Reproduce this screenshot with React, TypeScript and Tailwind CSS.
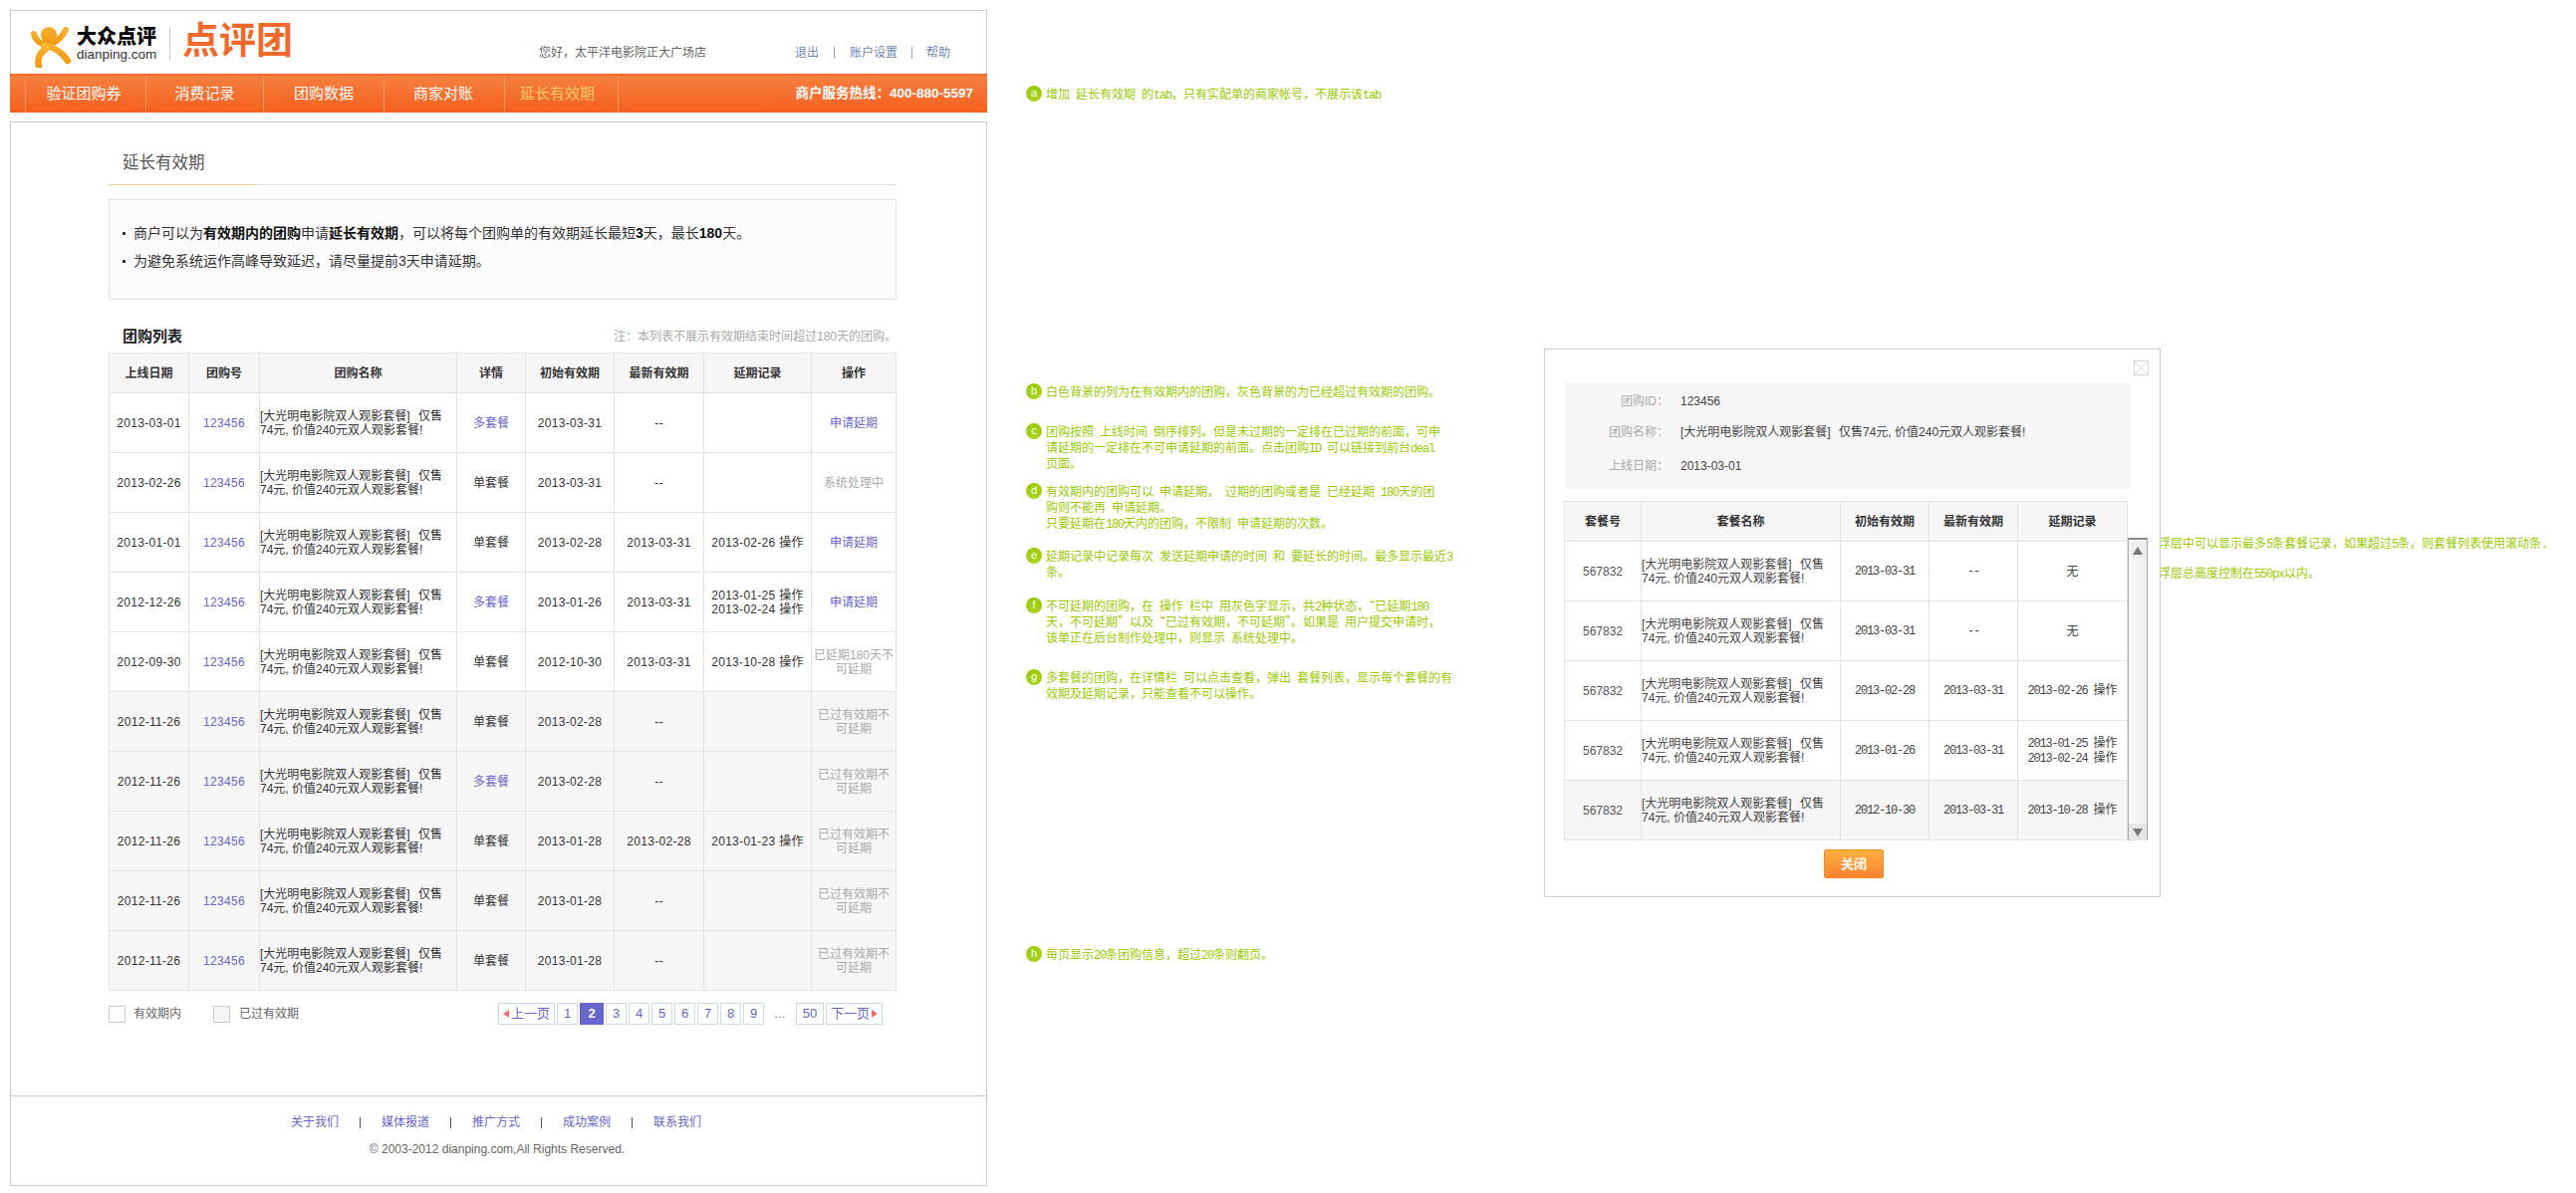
import React from "react";

const SANS = "font-['Liberation_Sans','Noto_Sans_CJK_SC',sans-serif]";

function Sim({ t }: { t: string }) {
  return (
    <>
      {t.split(/([\x20-\x7e]+)/).map((p, i) =>
        /^[\x20-\x7e]+$/.test(p) ? (
          <span key={i} className="font-['Liberation_Mono',monospace] tracking-[-1.2px] whitespace-pre">
            {p}
          </span>
        ) : (
          <span key={i}>{p}</span>
        )
      )}
    </>
  );
}

function Logo() {
  return (
    <svg width="44" height="44" viewBox="0 0 44 44" className="shrink-0">
      <defs>
        <linearGradient id="lg" x1="0" y1="0" x2="0" y2="1">
          <stop offset="0" stopColor="#f9b233" />
          <stop offset="1" stopColor="#f29a12" />
        </linearGradient>
      </defs>
      <circle cx="19" cy="11" r="8" fill="url(#lg)" />
      <path d="M4 10 C7 23 25 26 36 6" fill="none" stroke="url(#lg)" strokeWidth="6" strokeLinecap="round" />
      <path d="M14 22 C24 23 33 29 38 37" fill="none" stroke="url(#lg)" strokeWidth="6.5" strokeLinecap="round" />
      <path d="M17 24 C10 29 7 35 9 42" fill="none" stroke="url(#lg)" strokeWidth="6.5" strokeLinecap="round" />
    </svg>
  );
}

function Name() {
  return (
    <div className="text-left leading-[14px]">
      [大光明电影院双人观影套餐] <span className="ml-[5px]">仅售</span>
      <br />
      74元, 价值240元双人观影套餐!
    </div>
  );
}

const navItems = [
  { t: "验证团购券", c: "w-[121px] pr-[4px] text-white" },
  { t: "消费记录", c: "w-[118px] text-white" },
  { t: "团购数据", c: "w-[121px] text-white" },
  { t: "商家对账", c: "w-[121px] pr-[2px] text-white" },
  { t: "延长有效期", c: "w-[114px] pr-[8px] text-[#ffcc66]" },
];

type Row = {
  d: string;
  m: boolean;
  s: string;
  n: string;
  r: string[];
  op: string[];
  link?: boolean;
  past?: boolean;
};

const past = ["已过有效期不", "可延期"];
const rows: Row[] = [
  { d: "2013-03-01", m: true, s: "2013-03-31", n: "--", r: [], op: ["申请延期"], link: true },
  { d: "2013-02-26", m: false, s: "2013-03-31", n: "--", r: [], op: ["系统处理中"] },
  { d: "2013-01-01", m: false, s: "2013-02-28", n: "2013-03-31", r: ["2013-02-26 操作"], op: ["申请延期"], link: true },
  { d: "2012-12-26", m: true, s: "2013-01-26", n: "2013-03-31", r: ["2013-01-25 操作", "2013-02-24 操作"], op: ["申请延期"], link: true },
  { d: "2012-09-30", m: false, s: "2012-10-30", n: "2013-03-31", r: ["2013-10-28 操作"], op: ["已延期180天不", "可延期"] },
  { d: "2012-11-26", m: false, s: "2013-02-28", n: "--", r: [], op: past, past: true },
  { d: "2012-11-26", m: true, s: "2013-02-28", n: "--", r: [], op: past, past: true },
  { d: "2012-11-26", m: false, s: "2013-01-28", n: "2013-02-28", r: ["2013-01-23 操作"], op: past, past: true },
  { d: "2012-11-26", m: false, s: "2013-01-28", n: "--", r: [], op: past, past: true },
  { d: "2012-11-26", m: false, s: "2013-01-28", n: "--", r: [], op: past, past: true },
];

const headers = ["上线日期", "团购号", "团购名称", "详情", "初始有效期", "最新有效期", "延期记录", "操作"];
const colW = ["w-[80px]", "w-[71px]", "w-[198px]", "w-[69px]", "w-[89px]", "w-[90px]", "w-[108px]", "w-[85px]"];

function MainTable() {
  return (
    <table className="w-[791px] table-fixed border-collapse text-[12px] text-[#333] text-center">
      <colgroup>
        {colW.map((c, i) => (
          <col key={i} className={c} />
        ))}
      </colgroup>
      <thead>
        <tr className="h-[40px] bg-[#f6f6f6]">
          {headers.map((h) => (
            <th key={h} className="border border-[#e3e3e3] font-bold p-0">
              {h}
            </th>
          ))}
        </tr>
      </thead>
      <tbody>
        {rows.map((r, i) => (
          <tr key={i} className={r.past ? "h-[60px] bg-[#f6f6f6]" : "h-[60px]"}>
            <td className="border border-[#e3e3e3] p-0 tracking-[0.3px]">{r.d}</td>
            <td className="border border-[#e3e3e3] p-0 text-[#6666cc] tracking-[0.3px]">123456</td>
            <td className="border border-[#e3e3e3] p-0">
              <Name />
            </td>
            <td className={r.m ? "border border-[#e3e3e3] p-0 text-[#6666cc]" : "border border-[#e3e3e3] p-0"}>
              {r.m ? "多套餐" : "单套餐"}
            </td>
            <td className="border border-[#e3e3e3] p-0 tracking-[0.3px]">{r.s}</td>
            <td className="border border-[#e3e3e3] p-0 tracking-[0.3px]">{r.n}</td>
            <td className="border border-[#e3e3e3] p-0 leading-[14px] tracking-[0.3px]">
              {r.r.map((x) => (
                <div key={x}>{x}</div>
              ))}
            </td>
            <td className={r.link ? "border border-[#e3e3e3] p-0 text-[#6666cc] leading-[14px]" : "border border-[#e3e3e3] p-0 text-[#aaaaaa] leading-[14px]"}>
              {r.op.map((x) => (
                <div key={x}>{x}</div>
              ))}
            </td>
          </tr>
        ))}
      </tbody>
    </table>
  );
}

const pageBtn = "h-[22px] flex items-center justify-center border border-[#c9dbe6] text-[#6666cc] text-[13px]";

function Pager() {
  return (
    <div className="flex items-center gap-[2px] mr-[14px] text-[12px]">
      <div className={`${pageBtn} w-[57px] gap-[2px] text-[12px]`}>
        <span className="w-0 h-0 border-y-[4px] border-y-transparent border-r-[6px] border-r-[#ff6666]" />
        上一页
      </div>
      <div className={`${pageBtn} w-[21px]`}>1</div>
      <div className="h-[22px] w-[24px] flex items-center justify-center bg-[#6666cc] text-white font-bold text-[13px]">2</div>
      {["3", "4", "5", "6", "7", "8", "9"].map((p) => (
        <div key={p} className={`${pageBtn} w-[21px]`}>
          {p}
        </div>
      ))}
      <div className="w-[28px] text-center text-[#6688aa] text-[13px]">...</div>
      <div className={`${pageBtn} w-[28px]`}>50</div>
      <div className={`${pageBtn} w-[57px] gap-[2px] text-[12px]`}>
        下一页
        <span className="w-0 h-0 border-y-[4px] border-y-transparent border-l-[6px] border-l-[#ff6666]" />
      </div>
    </div>
  );
}

function Page() {
  return (
    <div className="w-[981px] shrink-0 text-[12px]">
      <header className="h-[64px] border-t border-x border-[#cccccc] flex items-start bg-white">
        <div className="ml-[19px] mt-[13px]">
          <Logo />
        </div>
        <div className="ml-[3px] mt-[15px] w-[82px]">
          <div className="text-[20px] leading-[22px] font-black text-black whitespace-nowrap">大众点评</div>
          <div className="text-[13.5px] leading-[14px] text-[#333] font-['Liberation_Sans',sans-serif] whitespace-nowrap">dianping.com</div>
        </div>
        <div className="ml-[11px] mt-[16px] h-[34px] w-px bg-[#cccccc]" />
        <div className="ml-[12px] mt-[11px] text-[37px] leading-[40px] font-bold text-[#f0692b] whitespace-nowrap">点评团</div>
        <div className="ml-[247px] mt-[33px] leading-[18px] text-[#666] whitespace-nowrap">您好，太平洋电影院正大广场店</div>
        <div className="ml-[89px] mt-[33px] flex items-center h-[18px] text-[#6d88b5] whitespace-nowrap">
          <span>退出</span>
          <span className="mx-[15px] w-px h-[12px] bg-[#8fa5c7]" />
          <span>账户设置</span>
          <span className="mx-[14px] w-px h-[12px] bg-[#8fa5c7]" />
          <span>帮助</span>
        </div>
      </header>
      <nav className="h-[39px] flex items-stretch bg-linear-to-b from-[#f57f3e] to-[#f55f1c] border-t-2 border-[#f0692b] pl-[15px]">
        <div className="flex items-stretch border-l border-[#f89a5f]">
          {navItems.map((n) => (
            <div key={n.t} className={`${n.c} flex items-center justify-center border-r border-[#f89a5f] text-[15px]`}>
              {n.t}
            </div>
          ))}
        </div>
        <div className="ml-auto pr-[14px] flex items-center text-white font-bold text-[13.5px] whitespace-nowrap">商户服务热线：400-880-5597</div>
      </nav>
      <main className="mt-[9px] border border-[#cccccc] bg-white">
        <div className="h-[977px] pl-[98px]">
          <div className="w-[791px]">
            <div className="h-[62px] pt-[30px] pl-[14px] text-[16.5px] leading-[20px] text-[#555]">延长有效期</div>
            <div className="flex h-px">
              <div className="w-[149px] bg-[#ecc9a0]" />
              <div className="flex-1 bg-[#e3e3e3]" />
            </div>
            <div className="mt-[14px] h-[101px] border border-[#e5e5e5] bg-[#fbfbfb] pt-[19px] pl-[24px] text-[14px] leading-[28px] text-[#333]">
              <div className="relative whitespace-nowrap">
                <span className="absolute -left-[11px] top-[13px] w-[3px] h-[3px] bg-[#333]" />
                商户可以为<b className="text-[#111]">有效期内的团购</b>申请<b className="text-[#111]">延长有效期</b>，可以将每个团购单的有效期延长最短<b className="text-[#111]">3</b>天，最长<b className="text-[#111]">180</b>天。
              </div>
              <div className="relative whitespace-nowrap">
                <span className="absolute -left-[11px] top-[13px] w-[3px] h-[3px] bg-[#333]" />
                为避免系统运作高峰导致延迟，请尽量提前3天申请延期。
              </div>
            </div>
            <div className="h-[53px] flex items-end justify-between pb-[8px] pl-[14px]">
              <div className="text-[15px] leading-[16px] font-bold text-[#222]">团购列表</div>
              <div className="text-[12px] leading-[16px] text-[#aaaaaa]">注：本列表不展示有效期结束时间超过180天的团购。</div>
            </div>
            <MainTable />
            <div className="mt-[12px] h-[22px] flex items-center justify-between">
              <div className="flex items-center text-[#666]">
                <span className="w-[17px] h-[17px] border border-[#cccccc] bg-white" />
                <span className="ml-[8px]">有效期内</span>
                <span className="ml-[32px] w-[17px] h-[17px] border border-[#cccccc] bg-[#f5f5f5]" />
                <span className="ml-[9px]">已过有效期</span>
              </div>
              <Pager />
            </div>
          </div>
        </div>
        <footer className="h-[90px] border-t border-[#cccccc] flex flex-col items-center">
          <div className="mt-[18px] mr-[5px] flex items-center h-[16px] text-[#6666cc] whitespace-nowrap">
            {["关于我们", "媒体报道", "推广方式", "成功案例", "联系我们"].map((t, i) => (
              <React.Fragment key={t}>
                {i > 0 && <span className="mx-[21px] w-px h-[11px] bg-[#555]" />}
                <span>{t}</span>
              </React.Fragment>
            ))}
          </div>
          <div className="mt-[11px] mr-[3px] text-[#666] leading-[16px]">© 2003-2012 dianping.com,All Rights Reserved.</div>
        </footer>
      </main>
    </div>
  );
}

const notes = [
  { l: "a", h: "h-[299px]", t: ["增加 延长有效期 的tab，只有实配单的商家帐号，不展示该tab"] },
  { l: "b", h: "h-[40px]", t: ["白色背景的列为在有效期内的团购，灰色背景的为已经超过有效期的团购。"] },
  { l: "c", h: "h-[60px]", t: ["团购按照 上线时间 倒序排列。但是未过期的一定排在已过期的前面，可申", "请延期的一定排在不可申请延期的前面。点击团购ID 可以链接到前台deal", "页面。"] },
  { l: "d", h: "h-[65px]", t: ["有效期内的团购可以 申请延期， 过期的团购或者是 已经延期 180天的团", "购则不能再 申请延期。", "只要延期在180天内的团购，不限制 申请延期的次数。"] },
  { l: "e", h: "h-[50px]", t: ["延期记录中记录每次 发送延期申请的时间 和 要延长的时间。最多显示最近3", "条。"] },
  { l: "f", h: "h-[72px]", t: ["不可延期的团购，在 操作 栏中 用灰色字显示，共2种状态，“已延期180", "天，不可延期”以及“已过有效期，不可延期”。如果是 用户提交申请时，", "该单正在后台制作处理中，则显示 系统处理中。"] },
  { l: "g", h: "h-[278px]", t: ["多套餐的团购，在详情栏 可以点击查看，弹出 套餐列表，显示每个套餐的有", "效期及延期记录，只能查看不可以操作。"] },
  { l: "h", h: "h-[16px]", t: ["每页显示20条团购信息，超过20条则翻页。"] },
];

function Notes() {
  return (
    <div className="ml-[39px] w-[480px] shrink-0 pt-[76px] text-[12px] text-[#99cc00] font-['Noto_Sans_CJK_SC',sans-serif]">
      {notes.map((n) => (
        <div key={n.l} className={`${n.h} flex items-start`}>
          <span className="w-[16px] h-[16px] rounded-full bg-linear-to-b from-[#99cc00] to-[#a8d420] text-white text-[11px] leading-[15px] text-center font-['Liberation_Sans',sans-serif] shrink-0">
            {n.l}
          </span>
          <div className="ml-[4px] pt-[1px] leading-[14px] whitespace-nowrap">
            {n.t.map((x) => (
              <div key={x}>
                <Sim t={x} />
              </div>
            ))}
          </div>
        </div>
      ))}
    </div>
  );
}

const subRows = [
  { s: "2013-03-31", n: "--", r: ["无"] },
  { s: "2013-03-31", n: "--", r: ["无"] },
  { s: "2013-02-28", n: "2013-03-31", r: ["2013-02-26 操作"] },
  { s: "2013-01-26", n: "2013-03-31", r: ["2013-01-25 操作", "2013-02-24 操作"] },
  { s: "2012-10-30", n: "2013-03-31", r: ["2013-10-28 操作"], past: true },
];

function Popup() {
  return (
    <div className="relative z-10 ml-[40px] mt-[340px] w-[619px] h-[551px] shrink-0 border border-[#cccccc] bg-white pl-[19px] pt-[33px] text-[12px] text-[#444]">
      <div className="absolute right-[11px] top-[11px] w-[15px] h-[15px] border border-[#d8d8d8]">
        <svg viewBox="0 0 13 13" className="w-[13px] h-[13px]">
          <path d="M0 0 L13 13 M13 0 L0 13" stroke="#d8d8d8" strokeWidth="1" />
        </svg>
      </div>
      <div className="w-[569px] h-[107px] bg-[#f6f6f6] pt-[8px]">
        <div className="flex items-center h-[22px]">
          <div className="w-[105px] text-right text-[#aaaaaa]">团购ID：</div>
          <div className="ml-[12px]">123456</div>
        </div>
        <div className="mt-[9px] flex items-center h-[22px]">
          <div className="w-[105px] text-right text-[#aaaaaa]">团购名称：</div>
          <div className="ml-[12px]">[大光明电影院双人观影套餐] <span className="ml-[5px]">仅售74元, 价值240元双人观影套餐!</span></div>
        </div>
        <div className="mt-[12px] flex items-center h-[22px]">
          <div className="w-[105px] text-right text-[#aaaaaa]">上线日期：</div>
          <div className="ml-[12px]">2013-03-01</div>
        </div>
      </div>
      <div className="mt-[12px] flex items-start">
        <table className="w-[566px] table-fixed border-collapse text-center shrink-0">
          <colgroup>
            <col className="w-[77px]" />
            <col className="w-[200px]" />
            <col className="w-[89px]" />
            <col className="w-[89px]" />
            <col className="w-[110px]" />
          </colgroup>
          <thead>
            <tr className="h-[40px] bg-[#f6f6f6]">
              {["套餐号", "套餐名称", "初始有效期", "最新有效期", "延期记录"].map((h) => (
                <th key={h} className="border border-[#e3e3e3] font-bold p-0 text-[#333]">
                  {h}
                </th>
              ))}
            </tr>
          </thead>
          <tbody>
            {subRows.map((r, i) => (
              <tr key={i} className={r.past ? "h-[60px] bg-[#f6f6f6]" : "h-[60px]"}>
                <td className="border border-[#e3e3e3] p-0 text-[#555]">567832</td>
                <td className="border border-[#e3e3e3] p-0">
                  <Name />
                </td>
                <td className="border border-[#e3e3e3] p-0">
                  <Sim t={r.s} />
                </td>
                <td className="border border-[#e3e3e3] p-0">
                  <Sim t={r.n} />
                </td>
                <td className="border border-[#e3e3e3] p-0 leading-[14px]">
                  {r.r.map((x) => (
                    <div key={x}>
                      <Sim t={x} />
                    </div>
                  ))}
                </td>
              </tr>
            ))}
          </tbody>
        </table>
        <div className="mt-[37px] w-[20px] h-[304px] shrink-0 border-x border-[#aaaaaa] border-t-2 border-t-[#888888] flex flex-col items-center bg-linear-to-r from-[#fbfbfb] to-[#eeeeee]">
          <div className="mt-[2px] w-[14px] h-[17px] bg-[#eeeeee] flex items-center justify-center">
            <span className="w-0 h-0 border-x-[5px] border-x-transparent border-b-[8px] border-b-[#777777]" />
          </div>
          <div className="mt-auto w-[18px] h-[17px] bg-[#e6e6e6] flex items-center justify-center">
            <span className="w-0 h-0 border-x-[5px] border-x-transparent border-t-[8px] border-t-[#777777]" />
          </div>
        </div>
      </div>
      <div className="mt-[9px] ml-[261px] w-[60px] h-[29px] rounded-[2px] border border-[#ee8a22] bg-linear-to-b from-[#ffb13d] to-[#f9822f] text-white font-bold text-[13px] flex items-center justify-center">
        关闭
      </div>
    </div>
  );
}

function SideNote() {
  return (
    <div className="-ml-[2px] pt-[521px] text-[12px] leading-[28px] text-[#99cc00] whitespace-nowrap font-['Noto_Sans_CJK_SC',sans-serif]">
      <div>
        <Sim t="浮层中可以显示最多5条套餐记录，如果超过5条，则套餐列表使用滚动条." />
      </div>
      <div>
        <Sim t="浮层总高度控制在550px以内。" />
      </div>
    </div>
  );
}

export default function App() {
  return (
    <div className={`${SANS} w-[2586px] h-[1198px] overflow-hidden bg-white flex items-start pl-[10px] pt-[10px]`}>
      <Page />
      <Notes />
      <Popup />
      <SideNote />
    </div>
  );
}
